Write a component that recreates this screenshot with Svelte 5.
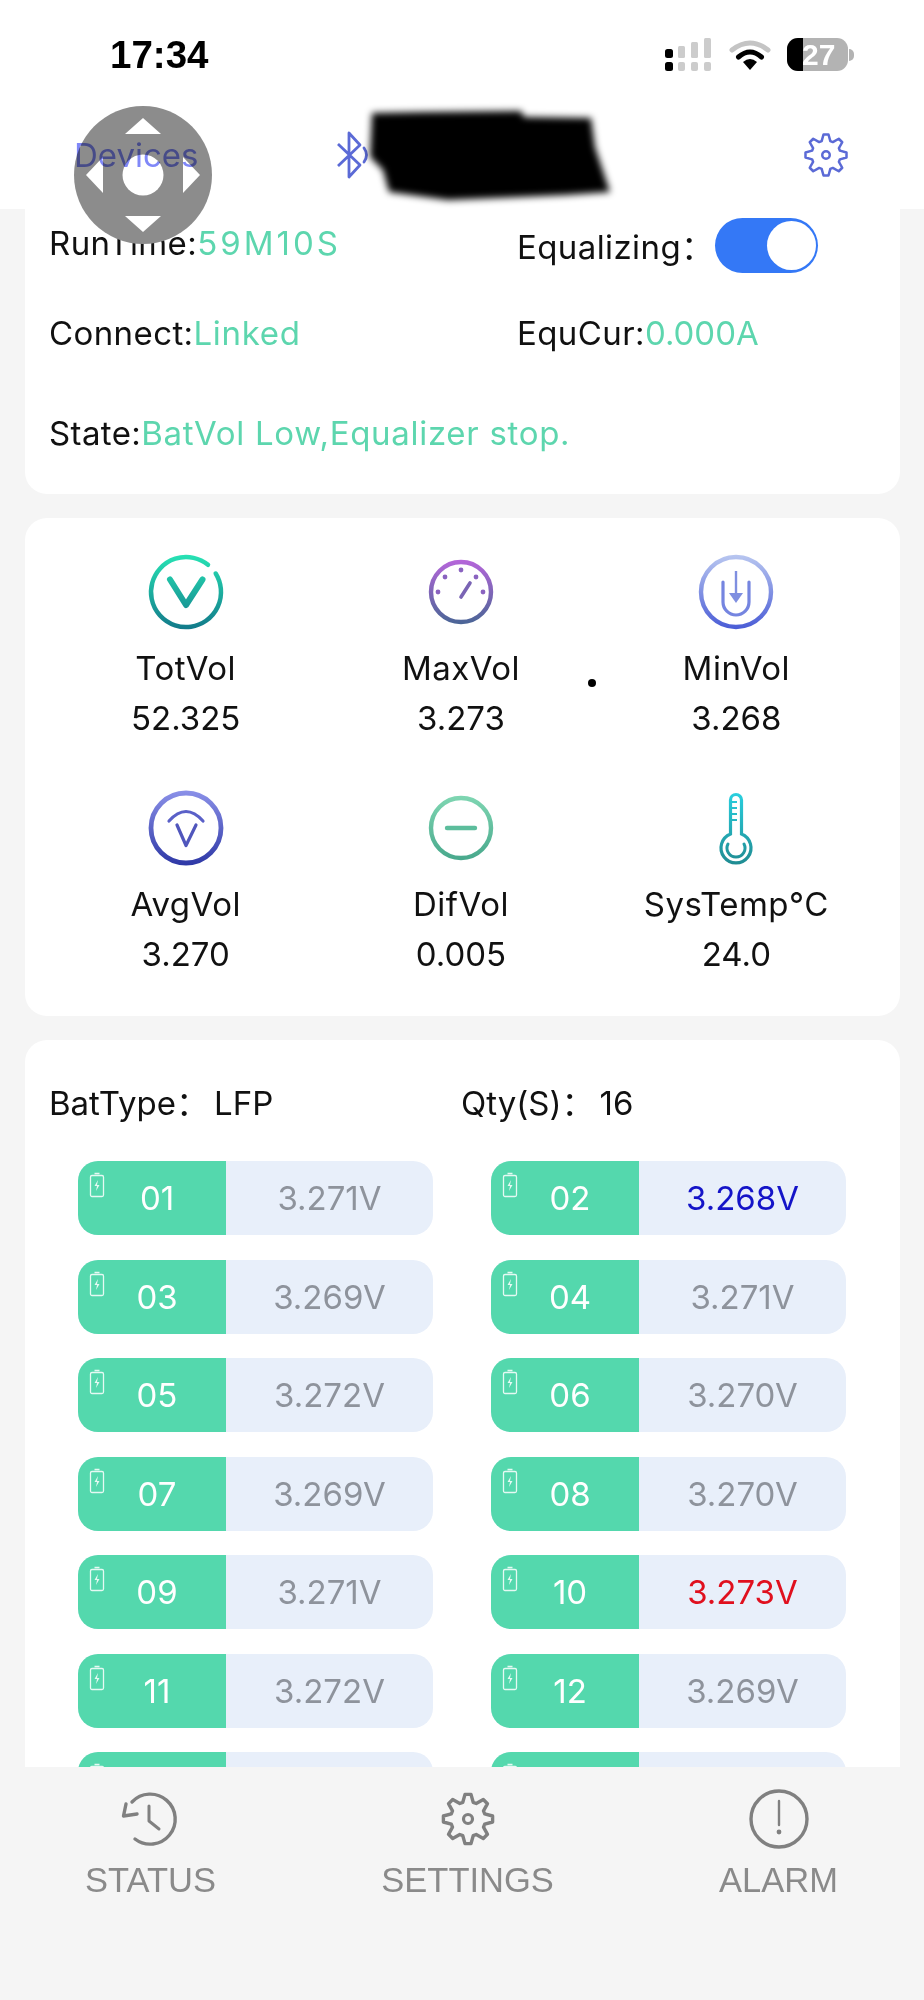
<script>
  const stats = [
    { label: 'TotVol', value: '52.325', icon: 'tot' },
    { label: 'MaxVol', value: '3.273', icon: 'max' },
    { label: 'MinVol', value: '3.268', icon: 'min' },
    { label: 'AvgVol', value: '3.270', icon: 'avg' },
    { label: 'DifVol', value: '0.005', icon: 'dif' },
    { label: 'SysTemp°C', value: '24.0', icon: 'temp' }
  ];

  // last row is cut off by the tab bar, only the top sliver of it shows
  const cells = [
    ['01', '3.271V'], ['02', '3.268V', 'low'],
    ['03', '3.269V'], ['04', '3.271V'],
    ['05', '3.272V'], ['06', '3.270V'],
    ['07', '3.269V'], ['08', '3.270V'],
    ['09', '3.271V'], ['10', '3.273V', 'high'],
    ['11', '3.272V'], ['12', '3.269V'],
    ['', ''], ['', '']
  ];

  // 8-tooth cog outline on a 60x60 box
  function cogPath() {
    const pts = [];
    for (let i = 0; i < 8; i++) {
      const a = (i * Math.PI) / 4 - Math.PI / 2;
      const steps = [[-0.3, 17.5], [-0.12, 24.8], [0.12, 24.8], [0.3, 17.5]];
      for (const [off, r] of steps) {
        pts.push((30 + r * Math.cos(a + off)).toFixed(1) + ' ' + (30 + r * Math.sin(a + off)).toFixed(1));
      }
    }
    return 'M' + pts.join('L') + 'Z';
  }
  const cog = cogPath();
</script>

<div class="screen">
  <header class="top">
    <div class="status">
      <span class="clock">17:34</span>
      <div class="indicators">
        <svg class="signal" width="48" height="34" viewBox="0 0 48 34">
          <rect x="0" y="11" width="8" height="9" rx="2.5" fill="#000" />
          <rect x="0" y="24" width="8" height="9" rx="2.5" fill="#000" />
          <rect x="13" y="8" width="7" height="12" rx="1.5" fill="#ccc" />
          <rect x="26" y="4" width="7" height="16" rx="1.5" fill="#ccc" />
          <rect x="39" y="0" width="7" height="20" rx="1.5" fill="#ccc" />
          <rect x="13" y="24" width="7" height="9" rx="2" fill="#ccc" />
          <rect x="26" y="24" width="7" height="9" rx="2" fill="#ccc" />
          <rect x="39" y="24" width="7" height="9" rx="2" fill="#ccc" />
        </svg>
        <svg class="wifi" width="42" height="32" viewBox="0 0 42 32">
          <path d="M3 11 Q21 -3 39 11" fill="none" stroke="#c4c4c4" stroke-width="5" stroke-linecap="round" />
          <path d="M9.5 18 Q21 8 32.5 18" fill="none" stroke="#000" stroke-width="5" stroke-linecap="round" />
          <path d="M14 23 Q21 17 28 23 L21 31Z" fill="#000" />
        </svg>
        <div class="battery">
          <div class="battery-body">
            <div class="battery-fill"></div>
            <span>27</span>
          </div>
          <div class="battery-nub"></div>
        </div>
      </div>
    </div>

    <nav class="nav">
      <span class="devices">Devices</span>
      <svg class="bt" width="36" height="48" viewBox="0 0 36 48">
        <path d="M2 13 L24 34 L13 46 V2 L24 14 L2 35" fill="none" stroke="#5b6ad6" stroke-width="2.8" stroke-linejoin="round" />
        <path d="M28 17 Q33 24 28 31" fill="none" stroke="#5b6ad6" stroke-width="2.8" stroke-linecap="round" />
      </svg>
      <svg class="redact" width="260" height="110" viewBox="360 100 260 110">
        <defs>
          <filter id="smudge"><feGaussianBlur stdDeviation="3.5" /></filter>
        </defs>
        <path d="M372 113 L424 112 L521 111 L524 117 L591 118 L595 147 L610 192 L566 195 L448 200 L389 192 L383 170 L370 157Z" fill="#000" filter="url(#smudge)" />
      </svg>
      <svg class="nav-gear" width="50" height="50" viewBox="0 0 60 60">
        <path d={cog} fill="none" stroke="#5b6ad6" stroke-width="3" stroke-linejoin="round" />
        <circle cx="30" cy="30" r="4.5" fill="none" stroke="#5b6ad6" stroke-width="3" />
      </svg>
    </nav>

    <svg class="dpad" width="138" height="138" viewBox="0 0 138 138">
      <circle cx="69" cy="69" r="69" fill="#8c8c8c" />
      <circle cx="69" cy="69" r="20.5" fill="#fff" />
      <path d="M69 12 L87 28 H51Z" fill="#fff" />
      <path d="M69 126 L87 110 H51Z" fill="#fff" />
      <path d="M12 69 L29 51 V87Z" fill="#fff" />
      <path d="M126 69 L109 51 V87Z" fill="#fff" />
    </svg>
  </header>

  <main class="content">
    <section class="card info">
      <div class="info-grid">
        <div class="line">RunTime:<span class="ok runtime">59M10S</span></div>
        <div class="line eq">
          Equalizing：
          <div class="toggle"><div class="knob"></div></div>
        </div>
        <div class="line">Connect:<span class="ok">Linked</span></div>
        <div class="line">EquCur:<span class="ok plain">0.000A</span></div>
      </div>
      <div class="line state">State:<span class="ok">BatVol Low,Equalizer stop.</span></div>
    </section>

    <section class="card stats">
      <span class="stray"></span>
      {#each stats as s}
        <div class="stat">
          <div class="stat-icon">
            {#if s.icon === 'tot'}
              <svg width="80" height="80" viewBox="0 0 80 80">
                <defs>
                  <linearGradient id="gTot" gradientUnits="userSpaceOnUse" x1="0" y1="3" x2="0" y2="77">
                    <stop offset="0" stop-color="#27e2b4" />
                    <stop offset="1" stop-color="#127a8a" />
                  </linearGradient>
                </defs>
                <path d="M69.7 21.5 A35 35 0 1 1 62 12.8" fill="none" stroke="url(#gTot)" stroke-width="4.5" stroke-linecap="round" />
                <path d="M24 27.5 L40 53 L56.5 27.5" fill="none" stroke="url(#gTot)" stroke-width="6" stroke-linecap="round" stroke-linejoin="round" />
              </svg>
            {:else if s.icon === 'max'}
              <svg width="80" height="80" viewBox="0 0 80 80">
                <defs>
                  <linearGradient id="gMax" gradientUnits="userSpaceOnUse" x1="0" y1="8" x2="0" y2="72">
                    <stop offset="0" stop-color="#b566da" />
                    <stop offset="1" stop-color="#4a6596" />
                  </linearGradient>
                </defs>
                <circle cx="40" cy="40" r="30" fill="none" stroke="url(#gMax)" stroke-width="4.4" />
                <g fill="#8a63c0">
                  <circle cx="24" cy="25" r="2.4" />
                  <circle cx="40" cy="18" r="2.4" />
                  <circle cx="55" cy="25" r="2.4" />
                  <circle cx="17" cy="40" r="2.4" />
                  <circle cx="62" cy="40" r="2.4" />
                </g>
                <path d="M40 45 L49 31" stroke="#7a64b4" stroke-width="3.6" stroke-linecap="round" />
              </svg>
            {:else if s.icon === 'min'}
              <svg width="80" height="80" viewBox="0 0 80 80">
                <defs>
                  <linearGradient id="gMin" gradientUnits="userSpaceOnUse" x1="0" y1="3" x2="0" y2="77">
                    <stop offset="0" stop-color="#b8c6f0" />
                    <stop offset="1" stop-color="#4a5cd6" />
                  </linearGradient>
                </defs>
                <circle cx="40" cy="40" r="35" fill="none" stroke="url(#gMin)" stroke-width="4.4" />
                <path d="M27 30 V50 A13 13 0 0 0 53 50 V30" fill="none" stroke="#7585e0" stroke-width="3.2" stroke-linecap="round" />
                <path d="M40 19 V45" stroke="#7f8fe0" stroke-width="2.4" />
                <path d="M33 41 H47 L40 51Z" fill="#7f8fe0" />
              </svg>
            {:else if s.icon === 'avg'}
              <svg width="80" height="80" viewBox="0 0 80 80">
                <defs>
                  <linearGradient id="gAvg" gradientUnits="userSpaceOnUse" x1="0" y1="3" x2="0" y2="77">
                    <stop offset="0" stop-color="#8a90e8" />
                    <stop offset="1" stop-color="#2e38a6" />
                  </linearGradient>
                </defs>
                <circle cx="40" cy="40" r="35" fill="none" stroke="url(#gAvg)" stroke-width="4.8" />
                <path d="M23 33 Q40 14 57 33" fill="none" stroke="#5a60c8" stroke-width="3.2" stroke-linecap="round" />
                <path d="M31 37 L40 57.5 L50 37" fill="none" stroke="#5056bc" stroke-width="3.2" stroke-linecap="round" stroke-linejoin="round" />
              </svg>
            {:else if s.icon === 'dif'}
              <svg width="80" height="80" viewBox="0 0 80 80">
                <defs>
                  <linearGradient id="gDif" gradientUnits="userSpaceOnUse" x1="0" y1="8" x2="0" y2="72">
                    <stop offset="0" stop-color="#7fd6b2" />
                    <stop offset="1" stop-color="#48a88c" />
                  </linearGradient>
                </defs>
                <circle cx="40" cy="40" r="30" fill="none" stroke="url(#gDif)" stroke-width="4.4" />
                <path d="M26 40 H54" stroke="#5cbd9c" stroke-width="4.4" stroke-linecap="round" />
              </svg>
            {:else}
              <svg width="40" height="76" viewBox="0 0 40 76">
                <defs>
                  <linearGradient id="gTemp" gradientUnits="userSpaceOnUse" x1="0" y1="0" x2="0" y2="76">
                    <stop offset="0" stop-color="#2ad2e2" />
                    <stop offset="1" stop-color="#1f8a90" />
                  </linearGradient>
                </defs>
                <path d="M14.5 44 V10 A5.5 5.5 0 0 1 25.5 10 V44 A15 15 0 1 1 14.5 44 Z" fill="none" stroke="url(#gTemp)" stroke-width="3.2" />
                <path d="M15 12 H21 M15 18 H21 M15 24 H21 M15 30 H21" stroke="url(#gTemp)" stroke-width="2.2" />
                <path d="M12 54 A9 9 0 1 0 28 54" fill="none" stroke="url(#gTemp)" stroke-width="3" stroke-linecap="round" />
              </svg>
            {/if}
          </div>
          <div class="stat-text stat-label">{s.label}</div>
          <div class="stat-text">{s.value}</div>
        </div>
      {/each}
    </section>

    <section class="card cells">
      <div class="bat-head">
        <div class="bat-type">BatType：<span>LFP</span></div>
        <div>Qty(S)：<span>16</span></div>
      </div>
      <div class="cell-grid">
        {#each cells as [no, volt, flag]}
          <div class="cell">
            <div class="cell-no">
              <svg class="cell-bat" width="16" height="26" viewBox="0 0 16 26">
                <path d="M5.5 1.5 H10.5 M3 3.5 H13 A1.5 1.5 0 0 1 14.5 5 V23 A1.5 1.5 0 0 1 13 24.5 H3 A1.5 1.5 0 0 1 1.5 23 V5 A1.5 1.5 0 0 1 3 3.5Z" fill="none" stroke="#fff" stroke-width="1.3" opacity="0.85" />
                <path d="M9 8 L5.5 14 H8 L7 19 L10.5 13 H8Z" fill="#fff" opacity="0.85" />
              </svg>
              {no}
            </div>
            <div class="cell-volt {flag ?? ''}">{volt}</div>
          </div>
        {/each}
      </div>
    </section>
  </main>

  <footer class="tabs">
    <div class="tab">
      <svg width="60" height="60" viewBox="0 0 60 60">
        <path d="M12 13 A25 25 0 1 1 15 50" fill="none" stroke="#808080" stroke-width="3.4" stroke-linecap="round" />
        <path d="M6 15 L3.5 27 L17 25" fill="none" stroke="#808080" stroke-width="3.4" stroke-linecap="round" stroke-linejoin="round" />
        <path d="M29 17 V32 L39 40" fill="none" stroke="#808080" stroke-width="3" stroke-linecap="round" stroke-linejoin="round" />
      </svg>
      <span>STATUS</span>
    </div>
    <div class="tab">
      <svg width="60" height="60" viewBox="0 0 60 60">
        <path d={cog} fill="none" stroke="#808080" stroke-width="3.4" stroke-linejoin="round" />
        <circle cx="30" cy="30" r="4.5" fill="none" stroke="#808080" stroke-width="3.2" />
      </svg>
      <span>SETTINGS</span>
    </div>
    <div class="tab">
      <svg width="60" height="60" viewBox="0 0 60 60">
        <circle cx="30" cy="30" r="28" fill="none" stroke="#808080" stroke-width="3.4" />
        <path d="M30 12 V36" stroke="#808080" stroke-width="2.4" stroke-linecap="round" />
        <circle cx="30" cy="43" r="2.4" fill="#808080" />
      </svg>
      <span>ALARM</span>
    </div>
  </footer>
</div>

<style>
  :global(body) {
    margin: 0;
    background: #f5f5f5;
  }

  .screen {
    position: relative;
    display: flex;
    flex-direction: column;
    height: 2000px;
    overflow: hidden;
    background: #f5f5f5;
    color: #111;
    font-family: Inter, "Noto Sans CJK SC", sans-serif;
    font-size: 33px;
  }

  .top {
    background: #fff;
    height: 209px;
    flex: none;
  }

  .status {
    display: flex;
    justify-content: space-between;
    align-items: center;
    height: 109px;
    padding: 0 70px 0 110px;
  }

  .clock {
    font-family: "Liberation Sans", sans-serif;
    font-size: 38.5px;
    font-weight: 700;
    color: #000;
  }

  .indicators {
    display: flex;
    align-items: center;
    gap: 16px;
  }

  .battery {
    display: flex;
    align-items: center;
    gap: 1px;
  }

  .battery-body {
    position: relative;
    width: 61px;
    height: 33px;
    border-radius: 11px;
    background: #b3b3b3;
    overflow: hidden;
  }

  .battery-fill {
    width: 16px;
    height: 100%;
    background: #000;
  }

  .battery-body span {
    position: absolute;
    left: 15px;
    top: 0;
    font-family: "Liberation Sans", sans-serif;
    line-height: 33px;
    font-size: 30px;
    font-weight: 700;
    color: #fff;
  }

  .battery-nub {
    width: 5px;
    height: 12px;
    border-radius: 0 5px 5px 0;
    background: #b3b3b3;
  }

  .nav {
    position: relative;
    display: flex;
    align-items: center;
    height: 92px;
    padding: 0 73px 0 74px;
  }

  .devices {
    position: relative;
    z-index: 2;
    width: 123px;
    white-space: nowrap;
    color: #8088f8;
    mix-blend-mode: multiply;
  }

  .bt {
    margin-left: 139px;
  }

  .redact {
    position: absolute;
    left: 360px;
    top: -9px;
  }

  .nav-gear {
    margin-left: auto;
  }

  .dpad {
    position: absolute;
    left: 74px;
    top: 106px;
    z-index: 1;
  }

  .content {
    flex: 1;
    min-height: 0;
    overflow: hidden;
    display: flex;
    flex-direction: column;
    gap: 24px;
    padding: 0 24px 0 25px;
  }

  .card {
    flex: none;
    background: #fff;
    border-radius: 22px;
  }

  .info {
    border-radius: 0 0 22px 22px;
    padding: 4px 0 31px 24px;
  }

  .info-grid {
    display: grid;
    grid-template-columns: 468px 1fr;
    grid-auto-rows: 60px;
    row-gap: 30px;
  }

  .line {
    display: flex;
    align-items: center;
    height: 60px;
    letter-spacing: 0.4px;
  }

  .ok {
    color: #5dd6ae;
    letter-spacing: 0.7px;
  }

  .ok.runtime {
    letter-spacing: 3px;
  }

  .ok.plain {
    letter-spacing: 0;
  }

  .eq {
    position: relative;
    top: 2px;
  }

  .toggle {
    width: 103px;
    height: 55px;
    margin-left: auto;
    margin-right: 82px;
    border-radius: 28px;
    background: #3478f6;
    position: relative;
  }

  .knob {
    position: absolute;
    right: 2px;
    top: 3px;
    width: 49px;
    height: 49px;
    border-radius: 50%;
    background: #fff;
  }

  .state {
    margin-top: 40px;
  }

  .stats {
    position: relative;
    display: grid;
    grid-template-columns: repeat(3, 1fr);
    row-gap: 45px;
    padding: 34px 26px 37px 23px;
  }

  .stray {
    position: absolute;
    left: 563px;
    top: 161px;
    width: 8px;
    height: 8px;
    border-radius: 50%;
    background: #000;
  }

  .stat {
    display: flex;
    flex-direction: column;
    align-items: center;
  }

  .stat-icon {
    display: flex;
    align-items: center;
    justify-content: center;
    height: 80px;
    margin-bottom: 11px;
  }

  .stat-text {
    line-height: 50px;
  }

  .stat-label {
    letter-spacing: 0.5px;
  }

  .cells {
    padding: 38px 54px 0 53px;
  }

  .bat-head {
    display: flex;
    margin-left: -29px;
    line-height: 50px;
  }

  .bat-type {
    width: 412px;
  }

  .bat-head span {
    margin-left: 5px;
  }

  .cell-grid {
    display: grid;
    grid-template-columns: repeat(2, 355px);
    column-gap: 58px;
    row-gap: 24.5px;
    margin-top: 33px;
  }

  .cell {
    display: flex;
    height: 74px;
    border-radius: 20px;
    overflow: hidden;
    background: #e8effa;
  }

  .cell-no {
    position: relative;
    flex: none;
    width: 138px;
    padding-left: 10px;
    display: flex;
    align-items: center;
    justify-content: center;
    background: #54d8ad;
    color: #fff;
  }

  .cell-bat {
    position: absolute;
    left: 11px;
    top: 11px;
  }

  .cell-volt {
    flex: 1;
    display: flex;
    align-items: center;
    justify-content: center;
    color: #8e939c;
  }

  .cell-volt.low {
    color: #1414c8;
  }

  .cell-volt.high {
    color: #e0101e;
  }

  .tabs {
    flex: none;
    height: 233px;
    display: flex;
    justify-content: space-between;
    padding: 22px 86px 0 85px;
    box-sizing: border-box;
    background: #f5f5f5;
    color: #8a8a8a;
    font-family: "Liberation Sans", sans-serif;
    font-size: 34.5px;
  }

  .tab {
    display: flex;
    flex-direction: column;
    align-items: center;
    gap: 11px;
    line-height: 40px;
  }
</style>
